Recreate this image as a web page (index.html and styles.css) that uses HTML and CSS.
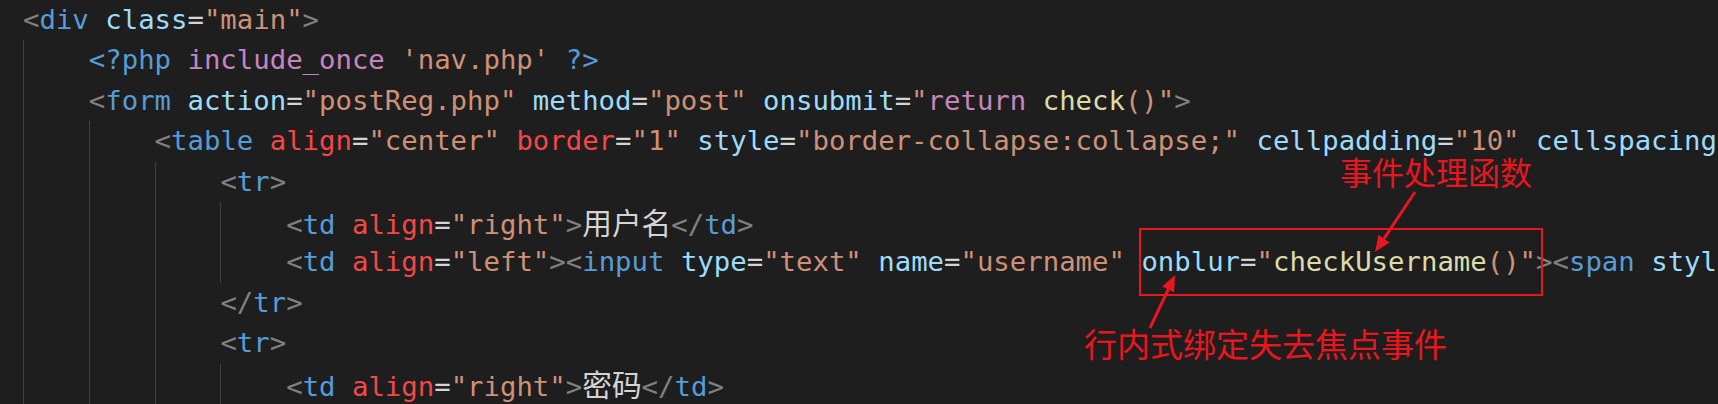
FILE: index.html
```html
<!DOCTYPE html>
<html lang="zh-CN">
<head>
<meta charset="utf-8">
<title>code</title>
<link rel="stylesheet" href="styles.css">
</head>
<body>
<div class="editor">
<div class="line"><span class="p">&lt;</span><span class="t">div</span> <span class="a">class</span><span class="o">=</span><span class="s">"main"</span><span class="p">&gt;</span></div>
<div class="line"><span class="g"></span><span class="t">&lt;?php</span> <span class="k">include_once</span> <span class="s">'nav.php'</span> <span class="t">?&gt;</span></div>
<div class="line"><span class="g"></span><span class="p">&lt;</span><span class="t">form</span> <span class="a">action</span><span class="o">=</span><span class="s">"postReg.php"</span> <span class="a">method</span><span class="o">=</span><span class="s">"post"</span> <span class="a">onsubmit</span><span class="o">=</span><span class="s">"</span><span class="k">return</span> <span class="f">check</span><span class="s">()"</span><span class="p">&gt;</span></div>
<div class="line"><span class="g"></span><span class="g"></span><span class="p">&lt;</span><span class="t">table</span> <span class="r">align</span><span class="o">=</span><span class="s">"center"</span> <span class="r">border</span><span class="o">=</span><span class="s">"1"</span> <span class="a">style</span><span class="o">=</span><span class="s">"border-collapse:collapse;"</span> <span class="a">cellpadding</span><span class="o">=</span><span class="s">"10"</span> <span class="a">cellspacing</span></div>
<div class="line"><span class="g"></span><span class="g"></span><span class="g"></span><span class="p">&lt;</span><span class="t">tr</span><span class="p">&gt;</span></div>
<div class="line"><span class="g"></span><span class="g"></span><span class="g"></span><span class="g"></span><span class="p">&lt;</span><span class="t">td</span> <span class="r">align</span><span class="o">=</span><span class="s">"right"</span><span class="p">&gt;</span><span class="cjk">用户名</span><span class="p">&lt;/</span><span class="t">td</span><span class="p">&gt;</span></div>
<div class="line"><span class="g"></span><span class="g"></span><span class="g"></span><span class="g"></span><span class="p">&lt;</span><span class="t">td</span> <span class="r">align</span><span class="o">=</span><span class="s">"left"</span><span class="p">&gt;&lt;</span><span class="t">input</span> <span class="a">type</span><span class="o">=</span><span class="s">"text"</span> <span class="a">name</span><span class="o">=</span><span class="s">"username"</span> <span class="a">onblur</span><span class="o">=</span><span class="s">"</span><span class="f">checkUsername</span><span class="s">()"</span><span class="p">&gt;&lt;</span><span class="t">span</span> <span class="a">styl</span></div>
<div class="line"><span class="g"></span><span class="g"></span><span class="g"></span><span class="p">&lt;/</span><span class="t">tr</span><span class="p">&gt;</span></div>
<div class="line"><span class="g"></span><span class="g"></span><span class="g"></span><span class="p">&lt;</span><span class="t">tr</span><span class="p">&gt;</span></div>
<div class="line"><span class="g"></span><span class="g"></span><span class="g"></span><span class="g"></span><span class="p">&lt;</span><span class="t">td</span> <span class="r">align</span><span class="o">=</span><span class="s">"right"</span><span class="p">&gt;</span><span class="cjk">密码</span><span class="p">&lt;/</span><span class="t">td</span><span class="p">&gt;</span></div>
</div>

<div class="mark-box"></div>
<div class="note note-top">事件处理函数</div>
<div class="note note-bottom">行内式绑定失去焦点事件</div>
<svg class="arrows" width="1718" height="404" viewBox="0 0 1718 404">
  <line x1="1415" y1="192" x2="1384" y2="238.7" stroke="#e8161f" stroke-width="3"/>
  <polygon points="1375,252 1389.5,242.4 1378.5,235" fill="#e8161f"/>
  <line x1="1150" y1="328" x2="1168.2" y2="289.5" stroke="#e8161f" stroke-width="3"/>
  <polygon points="1175,275 1174.2,292.5 1162.2,286.6" fill="#e8161f"/>
</svg>
</body>
</html>
```

FILE: styles.css
```css
html, body {
  margin: 0;
  padding: 0;
}
body {
  background: #1e1e1e;
  width: 1718px;
  height: 404px;
  overflow: hidden;
  position: relative;
}
.editor {
  padding-left: 23px;
  font-family: "DejaVu Sans Mono", monospace;
  font-size: 27.32px;
  line-height: 40.4px;
  color: #d4d4d4;
}
.line {
  height: 40.4px;
  white-space: pre;
}
.g {
  display: inline-block;
  width: 65.8px;
  height: 40.4px;
  vertical-align: top;
  border-left: 1px solid #404040;
  box-sizing: border-box;
}
.p { color: #808080; }
.t { color: #569cd6; }
.a { color: #9cdcfe; }
.r { color: #f44747; }
.s { color: #ce9178; }
.o { color: #d4d4d4; }
.f { color: #dcdcaa; }
.k { color: #c586c0; }
.cjk {
  font-family: "Noto Sans CJK SC", sans-serif;
  font-size: 29.7px;
  color: #d4d4d4;
}
.mark-box {
  position: absolute;
  left: 1139px;
  top: 228px;
  width: 404px;
  height: 68px;
  border: 2px solid #e8161f;
  box-sizing: border-box;
}
.note {
  position: absolute;
  font-family: "Noto Sans CJK SC", sans-serif;
  color: #e8161f;
  line-height: 1;
  white-space: nowrap;
}
.note-top {
  left: 1340px;
  top: 155px;
  font-size: 32px;
}
.note-bottom {
  left: 1084px;
  top: 327px;
  font-size: 33px;
}
.arrows {
  position: absolute;
  left: 0;
  top: 0;
  pointer-events: none;
}
```
